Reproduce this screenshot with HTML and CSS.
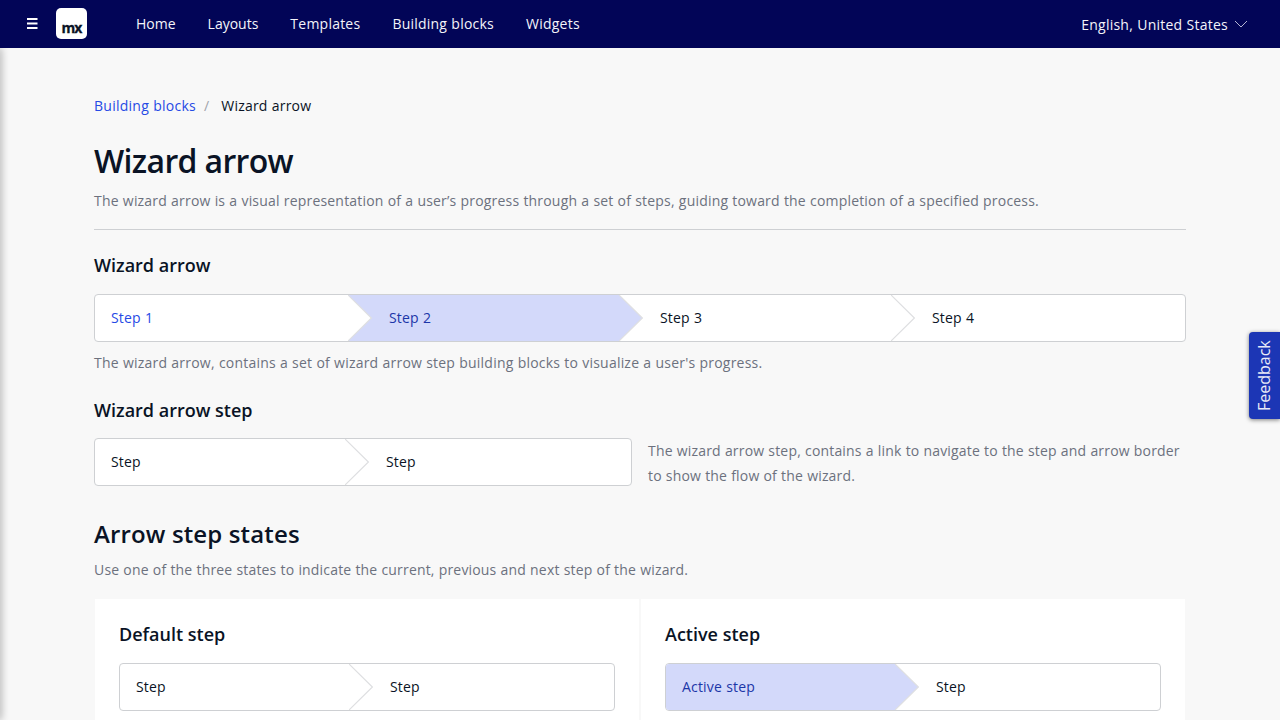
FILE: index.html
```html
<!DOCTYPE html>
<html lang="en">
<head>
<meta charset="utf-8">
<title>Wizard arrow</title>
<link rel="stylesheet" href="styles.css">
</head>
<body>
<header class="topbar">
  <svg class="menu" width="11" height="11" viewBox="0 0 11 11"><path d="M0 1h10.5M0 5.5h10.5M0 10h10.5" stroke="#fff" stroke-width="1.8"/></svg>
  <div class="logo"><span class="logo-text">mx</span></div>
  <nav class="nav"><a class="tight">Home</a><a class="tight">Layouts</a><a>Templates</a><a>Building blocks</a><a>Widgets</a></nav>
  <div class="language"><span>English, United States</span><svg width="14" height="8" viewBox="0 0 14 8"><path d="M1 1l6 6 6-6" fill="none" stroke="#b4b5d2" stroke-width="1"/></svg></div>
</header>
<div class="side-shadow"></div>
<main class="page">
  <div class="breadcrumb"><a class="link">Building blocks</a><span class="slash">/</span><span class="current">Wizard arrow</span></div>
  <h1>Wizard arrow</h1>
  <p class="intro">The wizard arrow is a visual representation of a user’s progress through a set of steps, guiding toward the completion of a specified process.</p>
  <h3>Wizard arrow</h3>
  <div class="wizard four">
    <div class="step visited">Step 1<svg class="arrow" width="25" height="46" viewBox="0 0 25 46"><path class="tip" d="M0 0l23.4 23L0 46"/></svg></div>
    <div class="step active">Step 2<svg class="arrow" width="25" height="46" viewBox="0 0 25 46"><path class="tip" d="M0 0l23.4 23L0 46"/></svg></div>
    <div class="step">Step 3<svg class="arrow" width="25" height="46" viewBox="0 0 25 46"><path class="tip" d="M0 0l23.4 23L0 46"/></svg></div>
    <div class="step">Step 4</div>
  </div>
  <p class="caption">The wizard arrow, contains a set of wizard arrow step building blocks to visualize a user's progress.</p>
  <h3 class="step-title">Wizard arrow step</h3>
  <div class="split">
    <div class="wizard two">
      <div class="step">Step<svg class="arrow" width="25" height="46" viewBox="0 0 25 46"><path class="tip" d="M0 0l23.4 23L0 46"/></svg></div>
      <div class="step">Step</div>
    </div>
    <p class="aside">The wizard arrow step, contains a link to navigate to the step and arrow border to show the flow of the wizard.</p>
  </div>
  <h2>Arrow step states</h2>
  <p class="states-intro">Use one of the three states to indicate the current, previous and next step of the wizard.</p>
  <div class="cards">
    <section class="card">
      <h3>Default step</h3>
      <div class="wizard pair">
        <div class="step">Step<svg class="arrow" width="25" height="46" viewBox="0 0 25 46"><path class="tip" d="M0 0l23.4 23L0 46"/></svg></div>
        <div class="step">Step</div>
      </div>
    </section>
    <section class="card">
      <h3>Active step</h3>
      <div class="wizard pair">
        <div class="step active">Active step<svg class="arrow" width="25" height="46" viewBox="0 0 25 46"><path class="tip" d="M0 0l23.4 23L0 46"/></svg></div>
        <div class="step">Step</div>
      </div>
    </section>
  </div>
</main>
<div class="feedback">Feedback</div>
</body>
</html>
```
FILE: styles.css
```css
* { box-sizing: border-box; }
html, body { height: 720px; overflow: hidden; }
body { margin: 0; background: #f8f8f8; color: #0a1325; font: 14px/25px "Open Sans", "Noto Sans", sans-serif; letter-spacing: .18px; word-spacing: .3px; }
h1, h2, h3, p { margin: 0; }
.topbar { height: 48px; background: #020557; color: #f4f4fa; display: flex; align-items: center; padding: 0 32px 0 27px; }
.menu { flex: none; margin-bottom: 1px; }
.logo { width: 31px; height: 31px; margin: 0 0 1px 18px; border-radius: 5px; background: #fff; color: #0a1325; display: flex; align-items: flex-end; justify-content: center; }
.logo-text { font-weight: 700; font-size: 14px; line-height: 20px; letter-spacing: -.8px; padding-bottom: 1px; -webkit-text-stroke: .3px #0a1325; }
.nav { display: flex; gap: 32px; margin-left: 49px; padding-bottom: 2px; }
.nav a { letter-spacing: .23px; }
.nav .tight { letter-spacing: 0; }
.language { margin-left: auto; display: flex; align-items: center; gap: 6px; letter-spacing: .24px; }
.side-shadow { position: absolute; left: -4px; top: 48px; width: 4px; height: 672px; box-shadow: 0 0 8px rgba(0,0,0,.5); clip-path: inset(0 -20px 0 0); }
.page { width: 1092px; margin: 0 auto; padding-top: 45px; }
.breadcrumb { display: flex; height: 25px; letter-spacing: .25px; }
.current { letter-spacing: .2px; }
.link { color: #264ae5; }
.slash { color: #a0a3aa; margin: 0 12px 0 8px; }
h1 { font-size: 32px; line-height: 42px; font-weight: 600; margin-top: 22px; letter-spacing: -.66px; word-spacing: 0; }
.intro { color: #6c717e; padding: 6px 0 15px; height: 48px; border-bottom: 1px solid #ced0d3; letter-spacing: .187px; }
h3 { font-size: 18px; line-height: 26px; font-weight: 600; letter-spacing: 0; word-spacing: 0; }
.page > h3 { margin-top: 22px; }
.page > .step-title { margin-top: 22px; }
.wizard { display: flex; height: 48px; border: 1px solid #ced0d3; border-radius: 4px; background: #fff; line-height: 46px; }
.four { margin-top: 16px; }
.step { position: relative; padding-left: 41px; flex: none; }
.step:first-child { padding-left: 16px; border-radius: 3px 0 0 3px; }
.four .step { width: 271.5px; }
.four .step:first-child { width: 253px; }
.four .step:nth-child(2) { width: 271px; }
.four .step:nth-child(3) { width: 272px; }
.two .step:first-child { width: 250px; }
.pair .step:first-child { width: 229px; }
.wizard .step:last-child { flex: 1; width: auto; }
.arrow { position: absolute; left: 100%; top: 0; z-index: 1; }
.tip { fill: #fff; stroke: #dedfe1; stroke-width: 1.2; }
.visited { color: #264ae5; }
.active { background: #d3d9fa; color: #1c36a8; }
.active .tip { fill: #d3d9fa; }
.caption { color: #6c717e; margin-top: 8px; letter-spacing: .21px; }
.split { display: grid; grid-template-columns: 538px 538px; gap: 16px; margin-top: 15px; }
.aside { color: #6c717e; letter-spacing: .17px; }
h2 { font-size: 24px; line-height: 32px; font-weight: 600; margin-top: 30px; letter-spacing: .14px; word-spacing: 0; }
.states-intro { color: #6c717e; margin-top: 7px; letter-spacing: .17px; }
.cards { display: grid; grid-template-columns: 544px 544px; gap: 2px; margin: 17px 1px 0; }
.card { background: #fff; padding: 22px 24px 0; height: 121px; }
.pair { margin-top: 16px; }
.feedback { position: absolute; left: 1249px; top: 332px; width: 31px; height: 87px; writing-mode: vertical-rl; transform: rotate(180deg); background: #1c36b5; color: #e9ebf7; border-radius: 0 4px 4px 0; font-size: 16px; line-height: 31px; letter-spacing: 0; text-align: center; box-shadow: 0 -1px 4px rgba(0,0,0,.5); }
```
